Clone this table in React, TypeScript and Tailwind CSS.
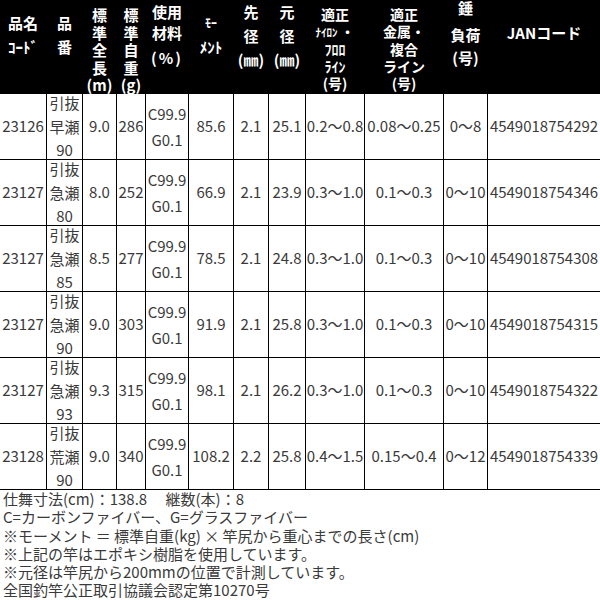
import React from "react";

type Row = {
  code: string;
  name: [string, string, string];
  len: string;
  wt: string;
  moment: string;
  tip: string;
  butt: string;
  nylon: string;
  metal: string;
  sinker: string;
  jan: string;
};

const rows: Row[] = [
  { code: "23126", name: ["引抜", "早瀬", "90"], len: "9.0", wt: "286", moment: "85.6", tip: "2.1", butt: "25.1", nylon: "0.2～0.8", metal: "0.08～0.25", sinker: "0～8", jan: "4549018754292" },
  { code: "23127", name: ["引抜", "急瀬", "80"], len: "8.0", wt: "252", moment: "66.9", tip: "2.1", butt: "23.9", nylon: "0.3～1.0", metal: "0.1～0.3", sinker: "0～10", jan: "4549018754346" },
  { code: "23127", name: ["引抜", "急瀬", "85"], len: "8.5", wt: "277", moment: "78.5", tip: "2.1", butt: "24.8", nylon: "0.3～1.0", metal: "0.1～0.3", sinker: "0～10", jan: "4549018754308" },
  { code: "23127", name: ["引抜", "急瀬", "90"], len: "9.0", wt: "303", moment: "91.9", tip: "2.1", butt: "25.8", nylon: "0.3～1.0", metal: "0.1～0.3", sinker: "0～10", jan: "4549018754315" },
  { code: "23127", name: ["引抜", "急瀬", "93"], len: "9.3", wt: "315", moment: "98.1", tip: "2.1", butt: "26.2", nylon: "0.3～1.0", metal: "0.1～0.3", sinker: "0～10", jan: "4549018754322" },
  { code: "23128", name: ["引抜", "荒瀬", "90"], len: "9.0", wt: "340", moment: "108.2", tip: "2.2", butt: "25.8", nylon: "0.4～1.5", metal: "0.15～0.4", sinker: "0～12", jan: "4549018754339" },
];

function Cell({ children }: { children: React.ReactNode }) {
  return (
    <div className="bg-white flex items-center justify-center text-center whitespace-nowrap text-[15px] text-[#3a3a3a]">
      {children}
    </div>
  );
}

function Head({ children, className = "" }: { children: React.ReactNode; className?: string }) {
  return (
    <div className={"bg-black flex flex-col items-center text-white font-bold whitespace-nowrap text-center " + className}>
      {children}
    </div>
  );
}

export default function App() {
  return (
    <div className="w-[600px] h-[600px] bg-white overflow-hidden font-['Noto_Sans_CJK_JP','Noto_Sans',sans-serif]">
      <div className="grid grid-cols-[46px_35px_33px_28px_42px_44px_34px_36px_58px_78px_43px_112px] grid-rows-[93px_repeat(6,65px)] gap-px bg-black border-b border-black">
        {/* header */}
        <Head className="pt-[11px] text-[15px]">
          <div className="h-[24px] leading-[24px]">品名</div>
          <div className="h-[24px] leading-[24px]">ｺｰﾄﾞ</div>
        </Head>
        <Head className="pt-[11px] text-[15px]">
          <div className="h-[24px] leading-[24px]">品</div>
          <div className="h-[24px] leading-[24px]">番</div>
        </Head>
        <Head className="pt-[6px] text-[15px]">
          <div className="h-[17.5px] leading-[17.5px]">標</div>
          <div className="h-[17.5px] leading-[17.5px]">準</div>
          <div className="h-[17.5px] leading-[17.5px]">全</div>
          <div className="h-[17.5px] leading-[17.5px]">長</div>
          <div className="h-[17.5px] leading-[17.5px]">(m)</div>
        </Head>
        <Head className="pt-[6px] text-[15px]">
          <div className="h-[17.5px] leading-[17.5px]">標</div>
          <div className="h-[17.5px] leading-[17.5px]">準</div>
          <div className="h-[17.5px] leading-[17.5px]">自</div>
          <div className="h-[17.5px] leading-[17.5px]">重</div>
          <div className="h-[17.5px] leading-[17.5px]">(g)</div>
        </Head>
        <Head className="pt-[2px] text-[15px]">
          <div className="h-[20px] leading-[20px]">使用</div>
          <div className="h-[22px] leading-[22px]">材料</div>
          <div className="h-[28px] leading-[28px] tracking-[2px]">(%)</div>
        </Head>
        <Head className="pt-[11px]">
          <div className="h-[24px] leading-[24px] text-[12px]">ﾓｰ</div>
          <div className="h-[24px] leading-[24px] text-[15px]">ﾒﾝﾄ</div>
        </Head>
        <Head className="text-[15px]">
          <div className="h-[24px] leading-[24px]">先</div>
          <div className="h-[24px] leading-[24px]">径</div>
          <div className="h-[24px] leading-[24px]">(㎜)</div>
        </Head>
        <Head className="text-[15px]">
          <div className="h-[24px] leading-[24px]">元</div>
          <div className="h-[24px] leading-[24px]">径</div>
          <div className="h-[24px] leading-[24px]">(㎜)</div>
        </Head>
        <Head className="pt-[6px] text-[14px]">
          <div className="h-[17.3px] leading-[17.3px]">適正</div>
          <div className="h-[17.3px] leading-[17.3px]"><span className="text-[11px]">ﾅｲﾛﾝ</span> ・</div>
          <div className="h-[17.3px] leading-[17.3px]">ﾌﾛﾛ</div>
          <div className="h-[17.3px] leading-[17.3px]">ﾗｲﾝ</div>
          <div className="h-[17.3px] leading-[17.3px]">(号)</div>
        </Head>
        <Head className="pt-[6px] text-[14px]">
          <div className="h-[17.3px] leading-[17.3px]">適正</div>
          <div className="h-[17.3px] leading-[17.3px]">金属・</div>
          <div className="h-[17.3px] leading-[17.3px]">複合</div>
          <div className="h-[17.3px] leading-[17.3px]">ライン</div>
          <div className="h-[17.3px] leading-[17.3px]">(号)</div>
        </Head>
        <Head className="text-[15px]">
          <div className="h-[16px] leading-[16px]">錘</div>
          <div className="h-[22px] leading-[22px] mt-[8px]">負荷</div>
          <div className="h-[24px] leading-[24px]">(号)</div>
        </Head>
        <Head className="pt-[21px] text-[15px]">
          <div className="h-[24px] leading-[24px]">JANコード</div>
        </Head>

        {/* body */}
        {rows.map((r, i) => (
          <React.Fragment key={i}>
            <Cell>{r.code}</Cell>
            <Cell>
              <div className="flex flex-col leading-[23.5px]">
                <span>{r.name[0]}</span>
                <span>{r.name[1]}</span>
                <span>{r.name[2]}</span>
              </div>
            </Cell>
            <Cell>{r.len}</Cell>
            <Cell>{r.wt}</Cell>
            <Cell>
              <div className="flex flex-col leading-[26px]">
                <span>C99.9</span>
                <span>G0.1</span>
              </div>
            </Cell>
            <Cell>{r.moment}</Cell>
            <Cell>{r.tip}</Cell>
            <Cell>{r.butt}</Cell>
            <Cell>{r.nylon}</Cell>
            <Cell>{r.metal}</Cell>
            <Cell>{r.sinker}</Cell>
            <Cell>{r.jan}</Cell>
          </React.Fragment>
        ))}
      </div>

      <div className="pl-[3px] text-[15px] leading-[18.3px] text-[#3a3a3a] whitespace-nowrap">
        <div>仕舞寸法(cm)：138.8　 継数(本)：8</div>
        <div>C=カーボンファイバー、G=グラスファイバー</div>
        <div>※モーメント ＝ 標準自重(kg) × 竿尻から重心までの長さ(cm)</div>
        <div>※上記の竿はエポキシ樹脂を使用しています。</div>
        <div>※元径は竿尻から200mmの位置で計測しています。</div>
        <div>全国釣竿公正取引協議会認定第10270号</div>
      </div>
    </div>
  );
}
